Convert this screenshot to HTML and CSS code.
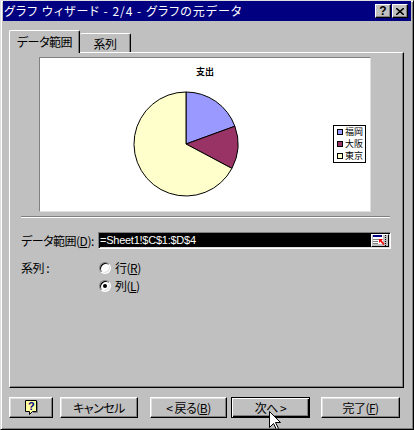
FILE: index.html
```html
<!DOCTYPE html>
<html lang="ja">
<head>
    <meta charset="UTF-8">
    <meta name="viewport" content="width=device-width, initial-scale=1.0">
    <title>グラフ ウィザード - 2/4 - グラフの元データ</title>
    <link rel="stylesheet" href="styles.css">
</head>
<body>
    <div class="window">
        <div class="titlebar">
            <span class="title-text">グラフ ウィザード - 2/4 - グラフの元データ</span>
            <div class="title-buttons">
                <button class="tbtn tbtn-help">?</button>
                <button class="tbtn">
                    <svg width="8" height="7" viewBox="0 0 8 7">
                        <path d="M0 0L8 7M8 0L0 7" stroke="#000" stroke-width="1.6"/>
                    </svg>
                </button>
            </div>
        </div>

        <div class="tabs">
            <div class="tab active">データ範囲</div>
            <div class="tab">系列</div>
        </div>

        <div class="panel">
            <div class="chart">
                <div class="chart-title">支出</div>
                <div class="chart-body">
                    <svg class="pie" width="108" height="108" viewBox="0 0 108 108">
                        <path d="M54 54L54 2A52 52 0 0 1 102.86 36.22Z" fill="#9999ff" stroke="#000"/>
                        <path d="M54 54L102.86 36.22A52 52 0 0 1 99.91 78.41Z" fill="#993366" stroke="#000"/>
                        <path d="M54 54L99.91 78.41A52 52 0 1 1 54 2Z" fill="#ffffcc" stroke="#000"/>
                    </svg>
                    <ul class="legend">
                        <li><span class="swatch swatch-blue"></span><span>福岡</span></li>
                        <li><span class="swatch swatch-maroon"></span><span>大阪</span></li>
                        <li><span class="swatch swatch-yellow"></span><span>東京</span></li>
                    </ul>
                </div>
            </div>

            <div class="separator"></div>

            <div class="form-row range-row">
                <span class="field-label">データ範囲(<u>D</u>):</span>
                <div class="range-field">
                    <span class="range-text">=Sheet1!$C$1:$D$4</span>
                    <button class="range-btn">
                        <svg width="14" height="11" viewBox="0 0 14 11">
                            <rect x="0" y="0" width="10" height="9" fill="#fff"/>
                            <rect x="0" y="0" width="9" height="2" fill="#000080"/>
                            <path d="M0 4.5H9M0 6.5H5M0 8.5H5" stroke="#808080"/>
                            <path d="M12.5 0V11" stroke="#000" stroke-dasharray="1 1"/>
                            <path d="M6 4H10L6 8Z" fill="#ff0000"/>
                            <path d="M7.5 5.5L11 9.5" stroke="#ff0000" stroke-width="1.6"/>
                        </svg>
                    </button>
                </div>
            </div>

            <div class="form-row series-row">
                <span class="field-label">系列 :</span>
                <div class="radios">
                    <label class="radio"><span class="radio-mark"></span><span>行(<u>R</u>)</span></label>
                    <label class="radio"><span class="radio-mark checked"></span><span>列(<u>L</u>)</span></label>
                </div>
            </div>
        </div>

        <div class="button-bar">
            <button class="btn btn-help">
                <svg width="14" height="17" viewBox="0 0 14 17">
                    <path d="M1.5 1.5H12.5V12.5H8.5L5.5 15.5V12.5H1.5Z" fill="#ffffa0" stroke="#000"/>
                    <path d="M13.5 2.5V13.5H9" stroke="#808080" fill="none"/>
                    <text x="7" y="11" text-anchor="middle" font-size="11" font-weight="bold" font-family="Liberation Sans, sans-serif" fill="#000080">?</text>
                </svg>
            </button>
            <button class="btn btn-cancel">キャンセル</button>
            <button class="btn btn-back">&lt;&nbsp;戻る(<u>B</u>)</button>
            <button class="btn btn-next">次へ&nbsp;&gt;</button>
            <button class="btn btn-finish">完了(<u>F</u>)</button>
        </div>

        <svg class="cursor" width="13" height="20" viewBox="0 0 13 20">
            <path d="M0.5 0.5V16.5L4.5 12.5L7.5 18.5L9.5 17.5L6.5 11.5H11.5Z" fill="#fff" stroke="#000"/>
        </svg>
    </div>
</body>
</html>
```

FILE: styles.css
```css
body {
    margin: 0;
    background-color: #c0c0c0;
    font-family: "Noto Sans CJK JP", "Noto Sans", sans-serif;
    font-size: 12px;
    font-feature-settings: "palt" 1;
    letter-spacing: -0.5px;
    color: #000;
}

.window {
    position: relative;
    width: 414px;
    height: 430px;
    box-sizing: border-box;
    background-color: #c0c0c0;
    border-top: 1px solid #dfdfdf;
    border-left: 1px solid #dfdfdf;
    border-right: 1px solid #000;
    border-bottom: 1px solid #000;
    box-shadow: inset 1px 1px #fff, inset -1px -1px #808080;
    padding: 0 2px 2px 2px;
    overflow: hidden;
}

.titlebar {
    height: 20px;
    background-color: #000080;
    color: #fff;
    display: flex;
    align-items: center;
    justify-content: space-between;
    padding: 0 3px 0 1px;
}

.title-text {
    line-height: 16px;
    letter-spacing: 1px;
    white-space: nowrap;
}

.title-buttons {
    display: flex;
    gap: 1px;
}

.tbtn {
    width: 16px;
    height: 14px;
    padding: 0;
    display: flex;
    align-items: center;
    justify-content: center;
    background-color: #c0c0c0;
    border: 1px solid;
    border-color: #fff #000 #000 #fff;
    box-shadow: inset -1px -1px #808080;
    font-family: "Liberation Sans", sans-serif;
    font-size: 12px;
    font-weight: bold;
    line-height: 12px;
    letter-spacing: 0;
    color: #000;
}

.tabs {
    display: flex;
    align-items: flex-end;
    height: 22px;
    margin-top: 9px;
    padding-left: 6px;
}

.tab {
    box-sizing: border-box;
    height: 19px;
    padding-top: 2px;
    line-height: 16px;
    text-align: center;
    background-color: #c0c0c0;
    border-top: 1px solid #fff;
    border-left: 1px solid #fff;
    border-right: 1px solid #000;
    box-shadow: inset -1px 0 #808080;
    border-radius: 2px 2px 0 0;
}

.tab.active {
    position: relative;
    z-index: 1;
    width: 71px;
    height: 23px;
    margin-bottom: -1px;
    padding-top: 3px;
}

.tab:not(.active) {
    width: 51px;
    border-left: none;
}

.panel {
    box-sizing: border-box;
    width: 395px;
    height: 336px;
    margin-left: 6px;
    padding: 4px 11px 0 11px;
    border: 1px solid;
    border-color: #fff #000 #000 #fff;
    box-shadow: inset -1px -1px #808080;
}

.chart {
    box-sizing: border-box;
    width: 332px;
    height: 155px;
    margin-left: 18px;
    background-color: #fff;
    border: 1px solid;
    border-color: #808080 #dfdfdf #dfdfdf #808080;
}

.chart-title {
    margin-top: 8px;
    text-align: center;
    font-size: 9px;
    font-weight: bold;
    line-height: 12px;
    letter-spacing: 0;
}

.chart-body {
    display: flex;
    align-items: center;
    gap: 93px;
    margin-top: 12px;
    padding-left: 92px;
}

.pie {
    display: block;
    flex-shrink: 0;
}

.legend {
    flex-shrink: 0;
    list-style-type: none;
    margin: 0;
    padding: 0 2px 0 3px;
    border: 1px solid #000;
    font-size: 9px;
    letter-spacing: 0;
}

.legend li {
    display: flex;
    align-items: center;
    gap: 2px;
    height: 12px;
    line-height: 12px;
    white-space: nowrap;
}

.swatch {
    width: 4px;
    height: 4px;
    border: 1px solid #000;
}

.swatch-blue {
    background-color: #9999ff;
}

.swatch-maroon {
    background-color: #993366;
}

.swatch-yellow {
    background-color: #ffffcc;
}

.separator {
    margin: 4px 2px 0 0;
    border-top: 1px solid #808080;
    border-bottom: 1px solid #fff;
}

.form-row {
    display: flex;
}

.field-label {
    width: 77px;
    flex-shrink: 0;
    white-space: nowrap;
}

.range-row {
    margin-top: 14px;
    height: 17px;
}

.range-row .field-label {
    line-height: 17px;
}

.range-field {
    box-sizing: border-box;
    display: flex;
    width: 293px;
    height: 17px;
    padding: 1px;
    border: 1px solid;
    border-color: #808080 #fff #fff #808080;
    box-shadow: inset 1px 1px #000, inset -1px -1px #dfdfdf;
}

.range-text {
    flex: 1;
    background-color: #000;
    color: #fff;
    font-family: "Liberation Sans", sans-serif;
    font-size: 11px;
    letter-spacing: -0.25px;
    line-height: 13px;
    white-space: nowrap;
    overflow: hidden;
}

.range-btn {
    box-sizing: border-box;
    width: 18px;
    height: 13px;
    padding: 0 0 0 1px;
    display: flex;
    align-items: center;
    background-color: #c0c0c0;
    border: 1px solid;
    border-color: #fff #000 #000 #fff;
}

.series-row {
    margin-top: 13px;
}

.series-row .field-label {
    line-height: 12px;
}

.radios {
    display: flex;
    flex-direction: column;
    gap: 6px;
    padding-left: 1px;
}

.radio {
    display: flex;
    align-items: center;
    gap: 4px;
    height: 12px;
    line-height: 12px;
    white-space: nowrap;
}

.radio-mark {
    box-sizing: border-box;
    position: relative;
    width: 12px;
    height: 12px;
    border-radius: 50%;
    background-color: #fff;
    border: 1px solid;
    border-color: #808080 #fff #fff #808080;
    box-shadow: inset 1px 1px #000, inset -1px -1px #dfdfdf;
}

.radio-mark.checked::after {
    content: "";
    position: absolute;
    left: 3px;
    top: 3px;
    width: 4px;
    height: 4px;
    border-radius: 50%;
    background-color: #000;
}

.button-bar {
    display: flex;
    margin-top: 9px;
    padding-left: 6px;
}

.btn {
    box-sizing: border-box;
    height: 21px;
    padding: 0;
    background-color: #c0c0c0;
    border: 1px solid;
    border-color: #fff #000 #000 #fff;
    box-shadow: inset -1px -1px #808080, inset 1px 1px #dfdfdf;
    font-family: inherit;
    font-size: 12px;
    font-feature-settings: "palt" 1;
    letter-spacing: -0.5px;
    line-height: 16px;
    color: #000;
    white-space: nowrap;
}

.btn-help {
    width: 44px;
    display: flex;
    align-items: center;
    justify-content: center;
}

.btn-cancel {
    width: 78px;
    margin-left: 7px;
}

.btn-back {
    width: 77px;
    margin-left: 12px;
}

.btn-next {
    width: 79px;
    margin-left: 4px;
    border-color: #000;
    box-shadow: inset 1px 1px #fff, inset -1px -1px #000, inset -2px -2px #808080;
}

.btn-finish {
    width: 79px;
    margin-left: 11px;
}

.cursor {
    position: absolute;
    left: 268px;
    top: 410px;
}
```
